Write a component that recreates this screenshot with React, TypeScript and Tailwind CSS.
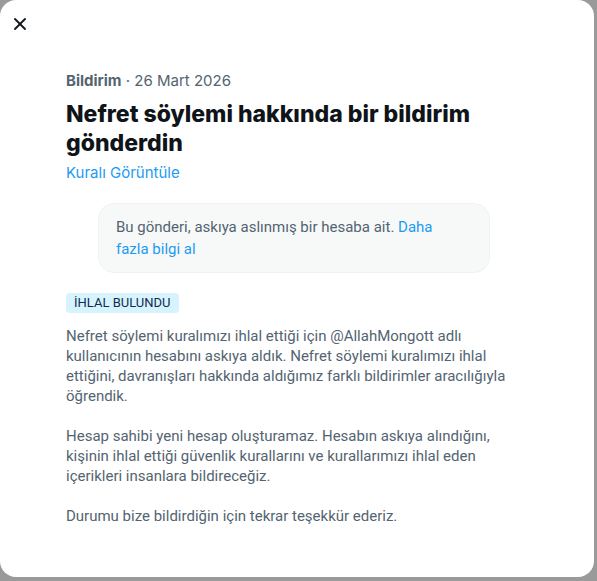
import { X } from 'lucide-react';

const head = { fontFamily: 'Inter, "Noto Sans", sans-serif' };
const body = { fontFamily: 'Roboto, "Noto Sans", sans-serif' };

export default function App() {
  return (
    <div className="h-[581px] w-[597px] overflow-hidden bg-[#9a9a9a]" style={head}>
      <div className="relative h-[577px] w-[594px] rounded-2xl bg-white">
        {/* close button */}
        <button className="absolute left-[10px] top-[14px] flex h-5 w-5 items-center justify-center text-[#0f1419]">
          <X className="h-5 w-5" strokeWidth={2.2} />
        </button>

        <div className="flex w-[522px] flex-col pl-[66px] pt-[71px]">
          <div className="text-[15px] leading-5 text-[#536471]">
            <span className="font-bold">Bildirim</span> · 26 Mart 2026
          </div>

          <h1 className="mt-[9px] text-[23px] font-extrabold leading-[29px] text-[#0f1419]">
            Nefret söylemi hakkında bir bildirim gönderdin
          </h1>

          <a className="mt-[5px] text-[15px] leading-5 text-[#1d9bf0]">Kuralı Görüntüle</a>

          <div
            className="mx-8 mt-[20px] rounded-2xl border border-[#eff3f4] bg-[#f7f9f9] py-[12px] pl-[17px] pr-[32px] text-[15px] leading-[22px] text-[#536471]"
            style={body}
          >
            Bu gönderi, askıya aslınmış bir hesaba ait.{' '}
            <span className="text-[#1d9bf0]">Daha fazla bilgi al</span>
          </div>

          <div className="mt-[20px] flex h-5 items-center self-start rounded bg-[#d7f3fd] px-2 text-[13px] text-[#0f2c4f]" style={body}>
            İHLAL BULUNDU
          </div>

          <p className="mt-[13px] whitespace-pre-line text-[15px] leading-5 text-[#536471]" style={body}>
            {`Nefret söylemi kuralımızı ihlal ettiği için @AllahMongott adlı kullanıcının hesabını askıya aldık. Nefret söylemi kuralımızı ihlal ettiğini, davranışları hakkında aldığımız farklı bildirimler aracılığıyla öğrendik.

Hesap sahibi yeni hesap oluşturamaz. Hesabın askıya alındığını, kişinin ihlal ettiği güvenlik kurallarını ve kurallarımızı ihlal eden içerikleri insanlara bildireceğiz.

Durumu bize bildirdiğin için tekrar teşekkür ederiz.`}
          </p>
        </div>
      </div>
    </div>
  );
}
